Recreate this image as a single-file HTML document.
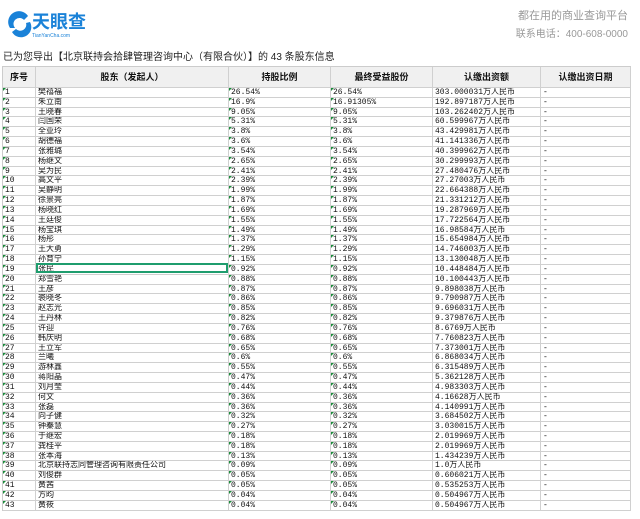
<!DOCTYPE html><html><head><meta charset="utf-8"><style>
body{margin:0;width:640px;height:519px;background:#fff;font-family:"Liberation Sans","Noto Sans CJK SC",sans-serif;position:relative;overflow:hidden}
.logo{position:absolute;left:6px;top:8px}
.rt{position:absolute;right:12px;color:#999;font-size:10px}
.title{position:absolute;left:3px;top:48px;font-size:10px;color:#222}
.g{position:absolute;left:2px;top:66px;display:grid;grid-template-columns:33px 193px 102px 102px 108px 90px;border-left:1px solid #ccc;border-top:1px solid #ccc}
.g div{border-right:1px solid #d0d0d0;border-bottom:1px solid #d0d0d0;font-size:8px;line-height:9px;height:8.84px;padding-left:2px;white-space:nowrap;overflow:hidden;color:#111;font-family:"Liberation Mono","Noto Sans CJK SC",monospace;position:relative}
.g div.h{height:20px;line-height:20px;background:#f0f0f0;text-align:center;font-weight:bold;font-size:9px;font-family:"Liberation Sans","Noto Sans CJK SC",sans-serif;padding:0}
.g div.t::before{content:"";position:absolute;left:0;top:0;border-top:3px solid #1a8a3a;border-right:3px solid transparent}
.sel{position:absolute;left:36px;top:263px;width:192px;height:10px;border:2px solid #1f9d6e;box-sizing:border-box}
</style></head><body>
<div class="logo"><svg width="110" height="30"><path d="M4 20 A10 10 0 0 1 22 8 L18 12 A6 6 0 0 0 9 20 Z" fill="#1a82d8"/><path d="M6 24 A10 10 0 0 0 24 14 L20 15 A6 6 0 0 1 10 21 Z" fill="#1a82d8"/><text x="26" y="20" font-size="18" font-weight="bold" fill="#1a82d8" font-family="Noto Sans CJK SC">天眼查</text><text x="26" y="29" font-size="5" fill="#1a82d8" font-family="Liberation Sans">TianYanCha.com</text></svg></div>
<div class="rt" style="top:7px;font-size:11px">都在用的商业查询平台</div>
<div class="rt" style="top:25px;font-size:10px">联系电话：400-608-0000</div>
<div class="title">已为您导出【北京联持会拾肆管理咨询中心（有限合伙）】的 43 条股东信息</div>
<div class="g" id="g"><div class="h">序号</div><div class="h">股东（发起人）</div><div class="h">持股比例</div><div class="h">最终受益股份</div><div class="h">认缴出资额</div><div class="h">认缴出资日期</div></div>
<div class="sel"></div>
<script>
var d=[["樊禧福","26.54%","26.54%","303.000031"],["朱立南","16.9%","16.91305%","192.897187"],["王晓春","9.05%","9.05%","103.262402"],["闫国荣","5.31%","5.31%","60.599967"],["全亚玲","3.8%","3.8%","43.429981"],["胡德福","3.6%","3.6%","41.141336"],["张雅璐","3.54%","3.54%","40.399962"],["杨继文","2.65%","2.65%","30.299993"],["吴为民","2.41%","2.41%","27.480476"],["高文平","2.39%","2.39%","27.27003"],["吴静明","1.99%","1.99%","22.664388"],["徐景亮","1.87%","1.87%","21.331212"],["杨晓红","1.69%","1.69%","19.287969"],["王廷俊","1.55%","1.55%","17.722564"],["杨宝琪","1.49%","1.49%","16.98584"],["杨彤","1.37%","1.37%","15.654984"],["王大勇","1.29%","1.29%","14.746003"],["孙育宁","1.15%","1.15%","13.130048"],["张民","0.92%","0.92%","10.448484"],["郑雪艳","0.88%","0.88%","10.100443"],["王彦","0.87%","0.87%","9.898038"],["裘晓冬","0.86%","0.86%","9.790987"],["赵志光","0.85%","0.85%","9.696031"],["王丹林","0.82%","0.82%","9.379876"],["许迎","0.76%","0.76%","8.6769"],["韩庆明","0.68%","0.68%","7.760823"],["王立军","0.65%","0.65%","7.373001"],["兰曦","0.6%","0.6%","6.868034"],["游林鑫","0.55%","0.55%","6.315489"],["蒋阳晶","0.47%","0.47%","5.362128"],["刘月莹","0.44%","0.44%","4.983303"],["何文","0.36%","0.36%","4.16628"],["张磊","0.36%","0.36%","4.140991"],["向子健","0.32%","0.32%","3.684502"],["钟秦慧","0.27%","0.27%","3.030015"],["于继宏","0.18%","0.18%","2.019969"],["龚桂平","0.18%","0.18%","2.019969"],["张本海","0.13%","0.13%","1.434239"],["北京联持志同管理咨询有限责任公司","0.09%","0.09%","1.0"],["刘俊群","0.05%","0.05%","0.606021"],["黄茜","0.05%","0.05%","0.535253"],["方昀","0.04%","0.04%","0.504967"],["黄筱","0.04%","0.04%","0.504967"]];
var g=document.getElementById('g'),h='';
d.forEach(function(r,i){h+='<div class="t">'+(i+1)+'</div><div>'+r[0]+'</div><div class="t">'+r[1]+'</div><div class="t">'+r[2]+'</div><div>'+r[3]+'万人民币</div><div>-</div>';});
g.insertAdjacentHTML('beforeend',h);
</script>
</body></html>
